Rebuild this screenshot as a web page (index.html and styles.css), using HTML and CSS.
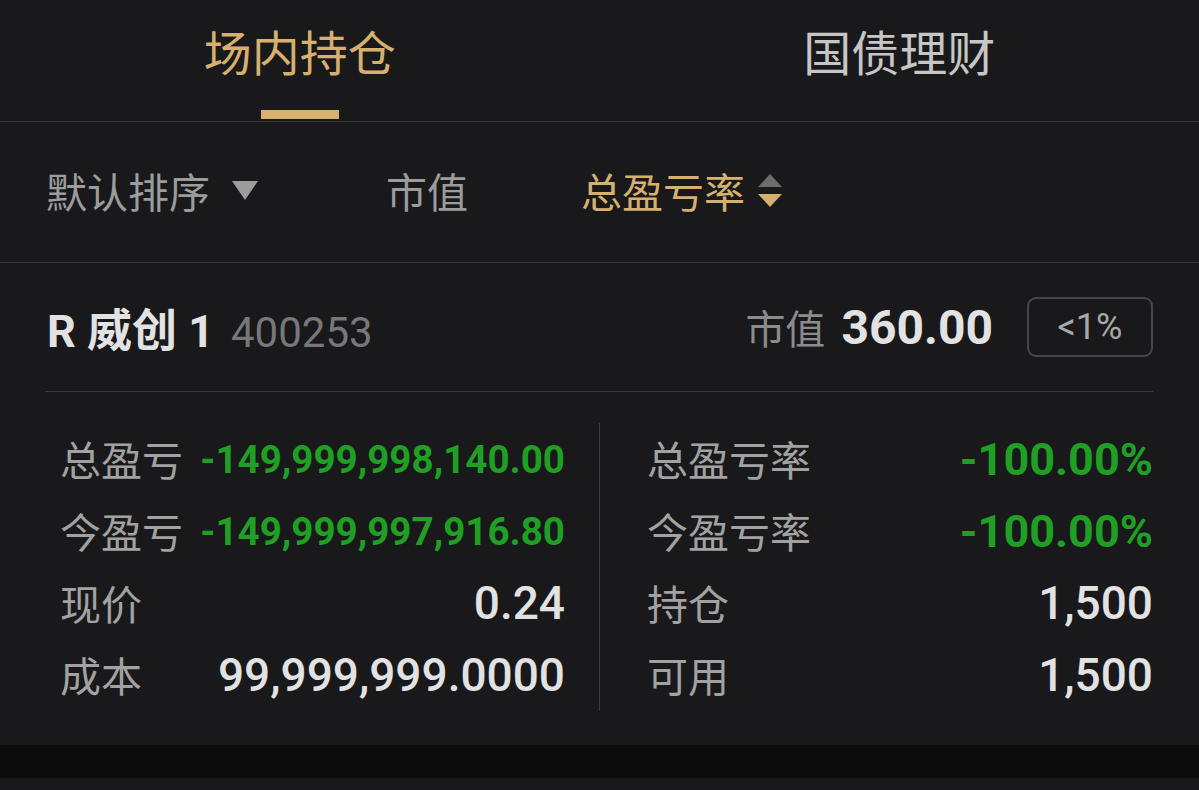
FILE: index.html
```html
<!DOCTYPE html>
<html lang="zh-CN">
<head>
<meta charset="utf-8">
<title>持仓</title>
<link rel="stylesheet" href="styles.css">
</head>
<body>
<div class="page">
  <nav class="tabs">
    <div class="tab active"><span class="tab-label">场内持仓</span><span class="tab-bar"></span></div>
    <div class="tab"><span class="tab-label">国债理财</span></div>
  </nav>

  <div class="sortbar">
    <div class="sort sort-default">默认排序<span class="tri-down"></span></div>
    <div class="sort sort-value">市值</div>
    <div class="sort sort-rate active">总盈亏率<span class="sort-arrows"><span class="arr-up"></span><span class="arr-down"></span></span></div>
  </div>

  <section class="card">
    <header class="card-head">
      <div class="stock">
        <span class="stock-name">R 威创 1</span>
        <span class="stock-code">400253</span>
      </div>
      <div class="mv">
        <span class="mv-label">市值</span>
        <span class="mv-value">360.00</span>
        <span class="badge">&lt;1%</span>
      </div>
    </header>
    <div class="stats">
      <div class="col col-left">
        <div class="row"><span class="lbl">总盈亏</span><span class="val green small">-149,999,998,140.00</span></div>
        <div class="row"><span class="lbl">今盈亏</span><span class="val green small">-149,999,997,916.80</span></div>
        <div class="row"><span class="lbl">现价</span><span class="val">0.24</span></div>
        <div class="row"><span class="lbl">成本</span><span class="val">99,999,999.0000</span></div>
      </div>
      <div class="col col-right">
        <div class="row"><span class="lbl">总盈亏率</span><span class="val green">-100.00%</span></div>
        <div class="row"><span class="lbl">今盈亏率</span><span class="val green">-100.00%</span></div>
        <div class="row"><span class="lbl">持仓</span><span class="val">1,500</span></div>
        <div class="row"><span class="lbl">可用</span><span class="val">1,500</span></div>
      </div>
    </div>
  </section>
  <div class="gap-strip"></div>
  <div class="rest"></div>
</div>
</body>
</html>
```

FILE: styles.css
```css
* { box-sizing: border-box; }
html, body { margin: 0; padding: 0; }
body {
  background: #19191b;
  font-family: Roboto, "Noto Sans CJK SC", sans-serif;
  color: #e0e0e0;
  width: 1199px;
  height: 790px;
  overflow: hidden;
}
.page { display: flex; flex-direction: column; }

/* tabs */
.tabs {
  display: flex;
  height: 122px;
  border-bottom: 1px solid #38383a;
}
.tab {
  flex: 1;
  display: flex;
  flex-direction: column;
  align-items: center;
  font-family: "Noto Sans CJK SC", sans-serif;
  font-size: 48px;
  color: #c6c6c6;
}
.tab-label { margin-top: 18px; line-height: 64px; }
.tab.active { color: #d6b06e; }
.tab-bar {
  margin-top: auto;
  margin-bottom: 2px;
  width: 78px;
  height: 9px;
  background: #d6b06e;
}

/* sort bar */
.sortbar {
  display: flex;
  align-items: center;
  height: 141px;
  padding-left: 46px;
  padding-bottom: 4px;
  border-bottom: 1px solid #38383a;
  font-family: "Noto Sans CJK SC", sans-serif;
  font-size: 41px;
  color: #9c9c9c;
}
.sort { display: flex; align-items: center; line-height: 56px; }
.sort-value { margin-left: 128px; }
.sort-rate { margin-left: 113px; color: #d6b06e; }
.tri-down {
  margin-left: 22px;
  width: 0; height: 0;
  border-left: 13px solid transparent;
  border-right: 13px solid transparent;
  border-top: 19px solid #9c9c9c;
}
.sort-arrows {
  margin-left: 13px;
  display: flex;
  flex-direction: column;
  gap: 7px;
}
.arr-up {
  width: 0; height: 0;
  border-left: 12px solid transparent;
  border-right: 12px solid transparent;
  border-bottom: 13px solid #6c6c6c;
}
.arr-down {
  width: 0; height: 0;
  border-left: 12px solid transparent;
  border-right: 12px solid transparent;
  border-top: 13px solid #d6b06e;
}

/* card */
.card { padding: 0 46px 0 45px; }
.card-head {
  display: flex;
  align-items: center;
  justify-content: space-between;
  height: 129px;
  border-bottom: 1px solid #3a3a3c;
}
.stock { display: flex; align-items: baseline; padding-left: 2px; }
.stock-name {
  font-family: Roboto, "Noto Sans CJK SC", sans-serif;
  font-weight: 700;
  font-size: 45px;
  color: #e2e2e2;
}
.stock-code {
  margin-left: 17px;
  font-size: 42px;
  color: #777779;
}
.mv { display: flex; align-items: center; }
.mv-label {
  font-family: "Noto Sans CJK SC", sans-serif;
  font-size: 40px;
  color: #8c8c8c;
}
.mv-value {
  margin-left: 16px;
  font-weight: 700;
  font-size: 48px;
  color: #e2e2e2;
}
.badge {
  margin-left: 34px;
  width: 126px;
  height: 60px;
  border: 2px solid #47474a;
  border-radius: 9px;
  display: flex;
  align-items: center;
  justify-content: center;
  font-size: 36px;
  color: #a8a8a8;
}

/* stats */
.stats {
  display: grid;
  grid-template-columns: 554px 554px;
  padding: 31px 0 34px;
}
.col { display: flex; flex-direction: column; }
.col-left { padding: 0 34px 0 15px; }
.col-right { border-left: 1px solid #3a3a3c; padding-left: 47px; }
.row {
  height: 72px;
  display: flex;
  align-items: center;
  justify-content: space-between;
}
.lbl {
  font-family: "Noto Sans CJK SC", sans-serif;
  font-size: 41px;
  line-height: 56px;
  padding-bottom: 3px;
  color: #a2a2a2;
}
.val {
  font-weight: 500;
  font-size: 46px;
  color: #e2e2e2;
}
.val.green { color: #1fa025; font-size: 45px; font-weight: 700; }
.val.green.small { font-size: 38.6px; }

.gap-strip { height: 33px; background: #0c0c0d; }
.rest { flex: 1; background: #19191b; height: 20px; }
```
